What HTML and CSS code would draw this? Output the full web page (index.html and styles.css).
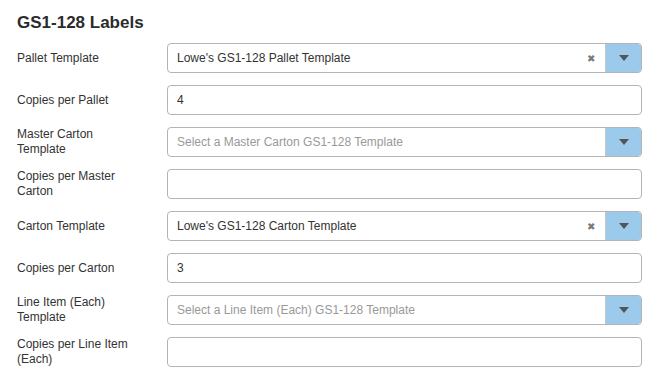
FILE: index.html
```html
<!DOCTYPE html>
<html lang="en">
<head>
    <meta charset="UTF-8">
    <title>GS1-128 Labels</title>
    <link rel="stylesheet" href="styles.css">
</head>
<body>
    <div class="panel">
        <h2>GS1-128 Labels</h2>

        <div class="form">
            <label class="label">Pallet Template</label>
            <div class="select">
                <span class="value">Lowe's GS1-128 Pallet Template</span>
                <span class="clear">&#x2716;</span>
                <span class="arrow"></span>
            </div>

            <label class="label">Copies per Pallet</label>
            <div class="input">4</div>

            <label class="label">Master Carton Template</label>
            <div class="select">
                <span class="value placeholder">Select a Master Carton GS1-128 Template</span>
                <span class="arrow"></span>
            </div>

            <label class="label">Copies per Master Carton</label>
            <div class="input"></div>

            <label class="label">Carton Template</label>
            <div class="select">
                <span class="value">Lowe's GS1-128 Carton Template</span>
                <span class="clear">&#x2716;</span>
                <span class="arrow"></span>
            </div>

            <label class="label">Copies per Carton</label>
            <div class="input">3</div>

            <label class="label">Line Item (Each) Template</label>
            <div class="select">
                <span class="value placeholder">Select a Line Item (Each) GS1-128 Template</span>
                <span class="arrow"></span>
            </div>

            <label class="label">Copies per Line Item (Each)</label>
            <div class="input"></div>
        </div>
    </div>
</body>
</html>
```

FILE: styles.css
```css
body {
    margin: 0;
    padding: 0;
    background: #fff;
    font-family: 'Liberation Sans', Arial, Helvetica, sans-serif;
    color: #333;
}

.panel {
    padding: 13px 22px 0 17px;
}

h2 {
    font-size: 17px;
    font-weight: bold;
    color: #2b2b2b;
    margin: 0 0 10px 0;
    line-height: 20px;
}

.form {
    display: grid;
    grid-template-columns: 150px 1fr;
    row-gap: 12px;
    align-items: center;
}

.label {
    font-size: 12px;
    line-height: 15px;
    color: #333;
    padding-right: 30px;
}

.input,
.select {
    box-sizing: border-box;
    height: 30px;
    border: 1px solid #b4b4b4;
    border-radius: 4px;
    background: #fff;
    font-size: 12px;
    color: #333;
    display: flex;
    align-items: center;
}

.input {
    padding: 0 9px;
}

.select {
    overflow: hidden;
}

.value {
    flex: 1;
    padding-left: 9px;
    white-space: nowrap;
}

.placeholder {
    color: #999;
}

.clear {
    font-size: 10px;
    color: #7a7a7a;
    padding: 0 10px;
}

.arrow {
    align-self: stretch;
    width: 35px;
    background: #9ccaea;
    border-left: 1px solid #c6c6c6;
    display: flex;
    align-items: center;
    justify-content: center;
}

.arrow::after {
    content: "";
    border-left: 5px solid transparent;
    border-right: 5px solid transparent;
    border-top: 6px solid #555;
}
```
